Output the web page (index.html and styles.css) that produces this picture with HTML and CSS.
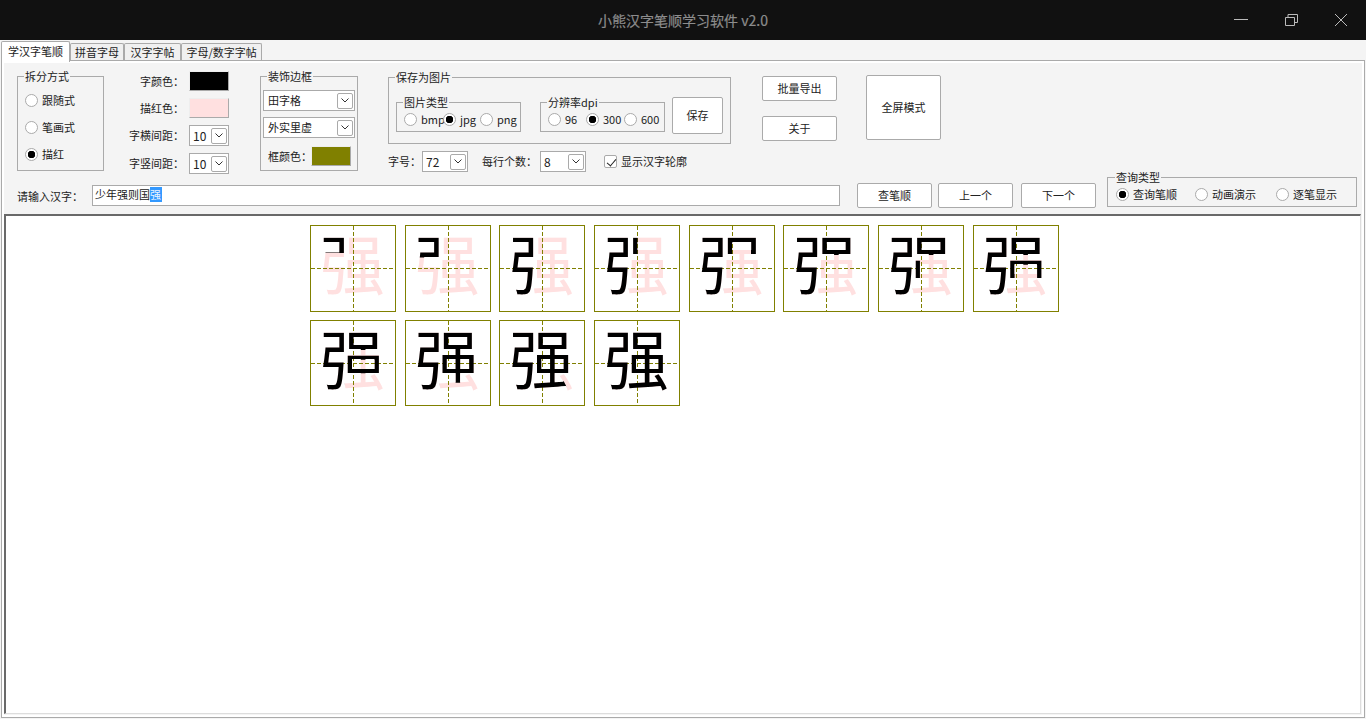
FILE: index.html
```html
<!DOCTYPE html>
<html lang="zh">
<head>
  <meta charset="UTF-8">
  <meta name="viewport" content="width=device-width, initial-scale=1.0">
  <title>小熊汉字笔顺学习软件 v2.0</title>
  <link rel="stylesheet" href="styles.css">
</head>
<body>

<header class="titlebar">
  <h1 class="app-title">小熊汉字笔顺学习软件 v2.0</h1>
  <div class="win-controls">
    <svg class="win-icon" width="50" height="40" viewBox="0 0 50 40"><path d="M18 19.5h14"/></svg>
    <svg class="win-icon" width="50" height="40" viewBox="0 0 50 40"><path d="M19.5 17.5h9v8h-9zM22 17.5v-3h9.5v8h-3"/></svg>
    <svg class="win-icon" width="50" height="40" viewBox="0 0 50 40"><path d="M19 14l12 12M31 14l-12 12"/></svg>
  </div>
</header>

<nav class="tabs">
  <div class="tab active">学汉字笔顺</div>
  <div class="tab">拼音字母</div>
  <div class="tab tab-wide">汉字字帖</div>
  <div class="tab tab-last">字母/数字字帖</div>
</nav>

<main class="panel">
  <section class="toolbar">
    <fieldset class="group split-group">
      <legend>拆分方式</legend>
      <label class="opt"><input type="radio" name="split">跟随式</label>
      <label class="opt"><input type="radio" name="split">笔画式</label>
      <label class="opt"><input type="radio" name="split" checked>描红</label>
    </fieldset>

    <div class="spacing-col">
      <div class="field"><span>字颜色：</span><div class="swatch swatch-black"></div></div>
      <div class="field"><span>描红色：</span><div class="swatch swatch-pink"></div></div>
      <div class="field field-tall"><span>字横间距：</span>
        <div class="combo combo-s">10<span class="combo-btn"><svg width="8" height="5" viewBox="0 0 8 5"><path d="M.5 .5L4 4 7.5 .5"/></svg></span></div>
      </div>
      <div class="field field-tall"><span>字竖间距：</span>
        <div class="combo combo-s">10<span class="combo-btn"><svg width="8" height="5" viewBox="0 0 8 5"><path d="M.5 .5L4 4 7.5 .5"/></svg></span></div>
      </div>
    </div>

    <fieldset class="group deco-group">
      <legend>装饰边框</legend>
      <div class="combo combo-l">田字格<span class="combo-btn"><svg width="8" height="5" viewBox="0 0 8 5"><path d="M.5 .5L4 4 7.5 .5"/></svg></span></div>
      <div class="combo combo-l">外实里虚<span class="combo-btn"><svg width="8" height="5" viewBox="0 0 8 5"><path d="M.5 .5L4 4 7.5 .5"/></svg></span></div>
      <div class="frame-color"><span>框颜色：</span><div class="swatch swatch-olive"></div></div>
    </fieldset>

    <div class="save-col">
      <fieldset class="group save-group">
        <legend>保存为图片</legend>
        <fieldset class="group type-group">
          <legend>图片类型</legend>
          <div class="opt-row type-row">
            <label class="opt"><input type="radio" name="type">bmp</label>
            <label class="opt"><input type="radio" name="type" checked>jpg</label>
            <label class="opt"><input type="radio" name="type">png</label>
          </div>
        </fieldset>
        <fieldset class="group dpi-group">
          <legend>分辨率dpi</legend>
          <div class="opt-row dpi-row">
            <label class="opt"><input type="radio" name="dpi">96</label>
            <label class="opt"><input type="radio" name="dpi" checked>300</label>
            <label class="opt"><input type="radio" name="dpi">600</label>
          </div>
        </fieldset>
        <button class="btn btn-save">保存</button>
      </fieldset>
      <div class="size-row">
        <span>字号：</span>
        <div class="combo combo-m">72<span class="combo-btn"><svg width="8" height="5" viewBox="0 0 8 5"><path d="M.5 .5L4 4 7.5 .5"/></svg></span></div>
        <span class="per-line">每行个数：</span>
        <div class="combo combo-m">8<span class="combo-btn"><svg width="8" height="5" viewBox="0 0 8 5"><path d="M.5 .5L4 4 7.5 .5"/></svg></span></div>
        <label class="opt outline-opt"><input type="checkbox" checked>显示汉字轮廓</label>
      </div>
    </div>

    <div class="btn-col">
      <button class="btn">批量导出</button>
      <button class="btn btn-about">关于</button>
    </div>
    <button class="btn btn-full">全屏模式</button>
  </section>

  <section class="input-row">
    <label class="input-label">请输入汉字：</label>
    <div class="text-input">少年强则国<span class="selected">强</span></div>
    <button class="btn btn-query">查笔顺</button>
    <button class="btn btn-prev">上一个</button>
    <button class="btn btn-next">下一个</button>
    <fieldset class="group query-group">
      <legend>查询类型</legend>
      <div class="opt-row query-row">
        <label class="opt"><input type="radio" name="query" checked>查询笔顺</label>
        <label class="opt"><input type="radio" name="query">动画演示</label>
        <label class="opt"><input type="radio" name="query">逐笔显示</label>
      </div>
    </fieldset>
  </section>

  <section class="canvas">
    <div class="sheet">
      <div class="cell"><span class="glyph pink">强</span><span class="glyph ink step-1">强</span></div>
      <div class="cell"><span class="glyph pink">强</span><span class="glyph ink step-2">强</span></div>
      <div class="cell"><span class="glyph pink">强</span><span class="glyph ink step-3">强</span></div>
      <div class="cell"><span class="glyph pink">强</span><span class="glyph ink step-4">强</span></div>
      <div class="cell"><span class="glyph pink">强</span><span class="glyph ink step-5">强</span></div>
      <div class="cell"><span class="glyph pink">强</span><span class="glyph ink step-6">强</span></div>
      <div class="cell"><span class="glyph pink">强</span><span class="glyph ink step-7">强</span></div>
      <div class="cell"><span class="glyph pink">强</span><span class="glyph ink step-8">强</span></div>
      <div class="cell"><span class="glyph pink">强</span><span class="glyph ink step-9">强</span></div>
      <div class="cell"><span class="glyph pink">强</span><span class="glyph ink step-10">强</span></div>
      <div class="cell"><span class="glyph pink">强</span><span class="glyph ink step-11">强</span></div>
      <div class="cell"><span class="glyph pink">强</span><span class="glyph ink">强</span></div>
    </div>
  </section>
</main>

</body>
</html>
```

FILE: styles.css
```css
* {
  box-sizing: border-box;
}

body {
  margin: 0;
  height: 719px;
  overflow: hidden;
  display: flex;
  flex-direction: column;
  background: #f4f4f4;
  color: #222;
  font: 11px/13px "Noto Sans CJK SC", sans-serif;
}

/* title bar */
.titlebar {
  position: relative;
  height: 40px;
  flex: none;
  display: flex;
  justify-content: center;
  align-items: center;
  background: #111;
}

.app-title {
  margin: 0;
  font-size: 14px;
  font-weight: 400;
  line-height: 40px;
  color: #8c8c8c;
  -webkit-text-stroke: 0.2px #8c8c8c;
}

.win-controls {
  position: absolute;
  top: 0;
  right: 0;
  display: flex;
}

.win-icon path {
  fill: none;
  stroke: #bbb;
  stroke-width: 1;
}

/* tabs */
.tabs {
  height: 20px;
  flex: none;
  display: flex;
  padding-left: 1px;
}

.tab {
  height: 17px;
  margin-top: 3px;
  padding: 0 4px;
  line-height: 16px;
  background: #f0f0f0;
  border: 1px solid #aaa;
  border-bottom: none;
  border-radius: 2px 2px 0 0;
}

.tab-wide {
  padding: 0 5.5px;
}

.tab-last {
  padding: 0 4.5px;
}

.tab.active {
  position: relative;
  z-index: 1;
  height: 21px;
  margin-top: 1px;
  padding: 0 6px;
  line-height: 18px;
  background: #fff;
  border-bottom: none;
}

/* main panel */
.panel {
  flex: 1;
  min-height: 0;
  display: flex;
  flex-direction: column;
  margin: 0 1px 1px;
  padding: 9px 2px 3px 15px;
  border: 1px solid #aaa;
  box-shadow: inset 0 0 0 2px #fff;
}

.toolbar {
  height: 101px;
  flex: none;
  display: flex;
  align-items: flex-start;
}

.group {
  margin: 0;
  padding: 0;
  min-width: 0;
  border: 1px solid #aaa;
}

.group legend {
  margin-left: -1px;
  padding: 0 1px;
  line-height: 13px;
}

.opt {
  display: flex;
  align-items: center;
  gap: 4px;
  white-space: nowrap;
}

input[type="radio"],
input[type="checkbox"] {
  appearance: none;
  flex: none;
  width: 13px;
  height: 13px;
  margin: 0;
  background: #fff;
  border: 1px solid #aaa;
}

input[type="radio"] {
  border-radius: 50%;
}

input[type="radio"]:checked {
  background: radial-gradient(circle, #000 0 3.5px, #fff 4px);
}

input[type="checkbox"] {
  position: relative;
  border-radius: 2px;
}

input[type="checkbox"]:checked::after {
  content: "";
  position: absolute;
  left: 3.5px;
  top: 0.5px;
  width: 4px;
  height: 8px;
  border: solid #222;
  border-width: 0 1px 1px 0;
  transform: rotate(40deg);
}

.opt-row {
  display: grid;
}

.split-group {
  width: 87px;
  height: 101px;
  padding: 11px 0 0 7px;
}

.split-group .opt {
  margin-bottom: 14px;
}

.spacing-col {
  width: 125px;
  margin-top: 1px;
  display: flex;
  flex-direction: column;
}

.field {
  height: 20px;
  margin-bottom: 7px;
  display: flex;
  justify-content: flex-end;
  align-items: center;
  gap: 5px;
}

.field-tall {
  height: 21px;
}

.swatch {
  flex: none;
  width: 40px;
  height: 20px;
  border: 1px solid;
  border-color: #eee #aaa #aaa #eee;
}

.swatch-black {
  background: #000;
}

.swatch-pink {
  background: #ffe0e0;
}

.swatch-olive {
  background: #808000;
}

.combo {
  flex: none;
  position: relative;
  height: 21px;
  display: flex;
  align-items: center;
  justify-content: space-between;
  padding: 0 1px 0 3px;
  background: #fff;
  border: 1px solid #aaa;
}

.combo-s,
.combo-m {
  font-size: 12px;
}

.combo-s {
  width: 40px;
}

.combo-m {
  width: 46px;
}

.combo-l {
  width: 92px;
  padding-left: 4px;
  margin-bottom: 6px;
}

.combo-btn {
  width: 16px;
  height: 16px;
  display: flex;
  align-items: center;
  justify-content: center;
  background: #fff;
  border: 1px solid #aaa;
  border-radius: 2px;
}

.combo-btn path {
  fill: none;
  stroke: #333;
  stroke-width: 1;
}

.deco-group {
  width: 98px;
  height: 101px;
  margin-left: 31px;
  padding: 7px 0 0 2px;
}

.deco-group legend {
  margin-left: 4px;
}

.frame-color {
  display: flex;
  align-items: center;
  margin: 8px 0 0 5px;
}

.frame-color .swatch {
  margin-left: -1px;
}

.save-col {
  width: 343px;
  margin-left: 30px;
  margin-top: 1px;
}

.save-group {
  height: 73px;
  padding: 12px 0 0 7px;
  display: flex;
  align-items: flex-start;
}

.type-group,
.dpi-group {
  width: 125px;
  height: 36px;
  padding-left: 7px;
}

.dpi-group {
  margin-left: 19px;
}

.type-row,
.dpi-row {
  padding-top: 4px;
}

.type-row {
  grid-template-columns: 39px 37px auto;
}

.dpi-row {
  grid-template-columns: 38px 38px auto;
}

.btn {
  width: 75px;
  height: 25px;
  padding: 0;
  background: #fff;
  border: 1px solid #aaa;
  border-radius: 2px;
  color: #222;
  font: inherit;
}

.btn-save {
  width: 51px;
  height: 37px;
  margin-left: 7px;
  margin-top: 1px;
}

.size-row {
  margin-top: 7px;
  display: flex;
  align-items: center;
}

.per-line {
  margin-left: 14px;
  margin-right: 3px;
}

.size-row .combo-m:first-of-type {
  margin-left: 1px;
}

.outline-opt {
  margin-left: 18px;
}

.btn-col {
  margin-left: 31px;
  margin-top: 6px;
  display: flex;
  flex-direction: column;
  gap: 15px;
}

.btn-full {
  height: 65px;
  margin-left: 29px;
  margin-top: 5px;
}

/* input row */
.input-row {
  height: 37px;
  flex: none;
  display: flex;
  align-items: flex-end;
}

.input-label {
  width: 75px;
  height: 20px;
  flex: none;
  margin-bottom: 2px;
  line-height: 20px;
}

.text-input {
  width: 748px;
  height: 21px;
  flex: none;
  margin-bottom: 2px;
  padding: 1px 0 0 2px;
  line-height: 15px;
  background: #fff;
  border: 1px solid #aaa;
}

.selected {
  display: inline-block;
  width: 12px;
  background: #3399ff;
  color: #e8f4ff;
}

.btn-query {
  margin-left: 17px;
}

.btn-prev {
  margin-left: 6px;
}

.btn-next {
  margin-left: 8px;
}

.query-group {
  width: 250px;
  height: 36px;
  margin-left: 11px;
  margin-bottom: 1px;
  padding-left: 8px;
}

.query-row {
  grid-template-columns: 79px 81px auto;
  padding-top: 4px;
}

/* stroke sheet */
.canvas {
  flex: 1;
  min-height: 0;
  margin: 6px 1px 0 -13px;
  padding: 9px 0 0 304px;
  background: #fff;
  border: 1px solid #ddd;
  border-top: 2px solid #696969;
  border-left: 2px solid #696969;
}

.sheet {
  display: grid;
  grid-template-columns: repeat(8, 86px);
  grid-template-rows: 87px 86px;
  column-gap: 8.67px;
  row-gap: 8px;
}

.cell {
  position: relative;
  display: grid;
  padding: 3px 0 0 9px;
  border: 1px solid #808000;
}

.cell::before,
.cell::after {
  content: "";
  position: absolute;
}

.cell::before {
  left: 42px;
  top: 0;
  bottom: 0;
  width: 1px;
  background: repeating-linear-gradient(to bottom, #808000 0 4px, transparent 4px 6px);
}

.cell::after {
  top: 42px;
  left: 0;
  right: 0;
  height: 1px;
  background: repeating-linear-gradient(to right, #808000 0 4px, transparent 4px 6px);
}

.glyph {
  grid-area: 1 / 1;
  width: 65px;
  height: 65px;
  font-size: 65px;
  line-height: 65px;
}

.pink {
  color: #ffe0e0;
}

.ink {
  position: relative;
  z-index: 1;
  color: #000;
}

/* each step shows one more stroke of the character */
.step-1 { clip-path: polygon(2px 8.5px, 24.5px 8.5px, 24.5px 24.1px, 2px 24.1px); }
.step-2 { clip-path: polygon(2px 8.5px, 24.5px 8.5px, 24.5px 28.6px, 2px 28.6px); }
.step-3 { clip-path: polygon(0 8.5px, 24.5px 8.5px, 24.5px 72px, 0 72px); }
.step-4 { clip-path: polygon(0 8.5px, 33.6px 8.5px, 33.6px 25.9px, 24.5px 25.9px, 24.5px 72px, 0 72px); }
.step-5 { clip-path: polygon(0 8.5px, 58px 8.5px, 58px 25.9px, 52.4px 25.9px, 52.4px 13.7px, 33.6px 13.7px, 33.6px 25.9px, 24.5px 25.9px, 24.5px 72px, 0 72px); }
.step-6 { clip-path: polygon(0 8.5px, 58px 8.5px, 58px 25.9px, 24.5px 25.9px, 24.5px 72px, 0 72px); }
.step-7 { clip-path: polygon(0 8.5px, 58px 8.5px, 58px 25.9px, 24.5px 25.9px, 24.5px 31.7px, 32px 31.7px, 32px 49.2px, 24.5px 49.2px, 24.5px 72px, 0 72px); }
.step-8 { clip-path: polygon(0 8.5px, 58px 8.5px, 58px 25.9px, 24.5px 25.9px, 24.5px 31.7px, 60px 31.7px, 60px 49.2px, 54.5px 49.2px, 54.5px 35.8px, 32px 35.8px, 32px 49.2px, 24.5px 49.2px, 24.5px 72px, 0 72px); }
.step-9 { clip-path: polygon(0 8.5px, 58px 8.5px, 58px 25.9px, 24.5px 25.9px, 24.5px 31.7px, 60px 31.7px, 60px 40px, 54.5px 40px, 54.5px 35.8px, 32px 35.8px, 32px 45.1px, 54.5px 45.1px, 54.5px 40px, 60px 40px, 60px 49.2px, 24.5px 49.2px, 24.5px 72px, 0 72px); }
.step-10 { clip-path: polygon(0 8.5px, 58px 8.5px, 58px 25.9px, 60px 25.9px, 60px 49.2px, 45.5px 49.2px, 45.5px 58.8px, 40.8px 58.8px, 40.8px 49.2px, 24.5px 49.2px, 24.5px 72px, 0 72px); }
.step-11 { clip-path: polygon(0 8.5px, 58px 8.5px, 58px 25.9px, 60px 25.9px, 60px 49.2px, 45.5px 49.2px, 45.5px 57.5px, 54.3px 57px, 57px 62.2px, 25px 65.5px, 24.5px 72px, 0 72px); }
```
